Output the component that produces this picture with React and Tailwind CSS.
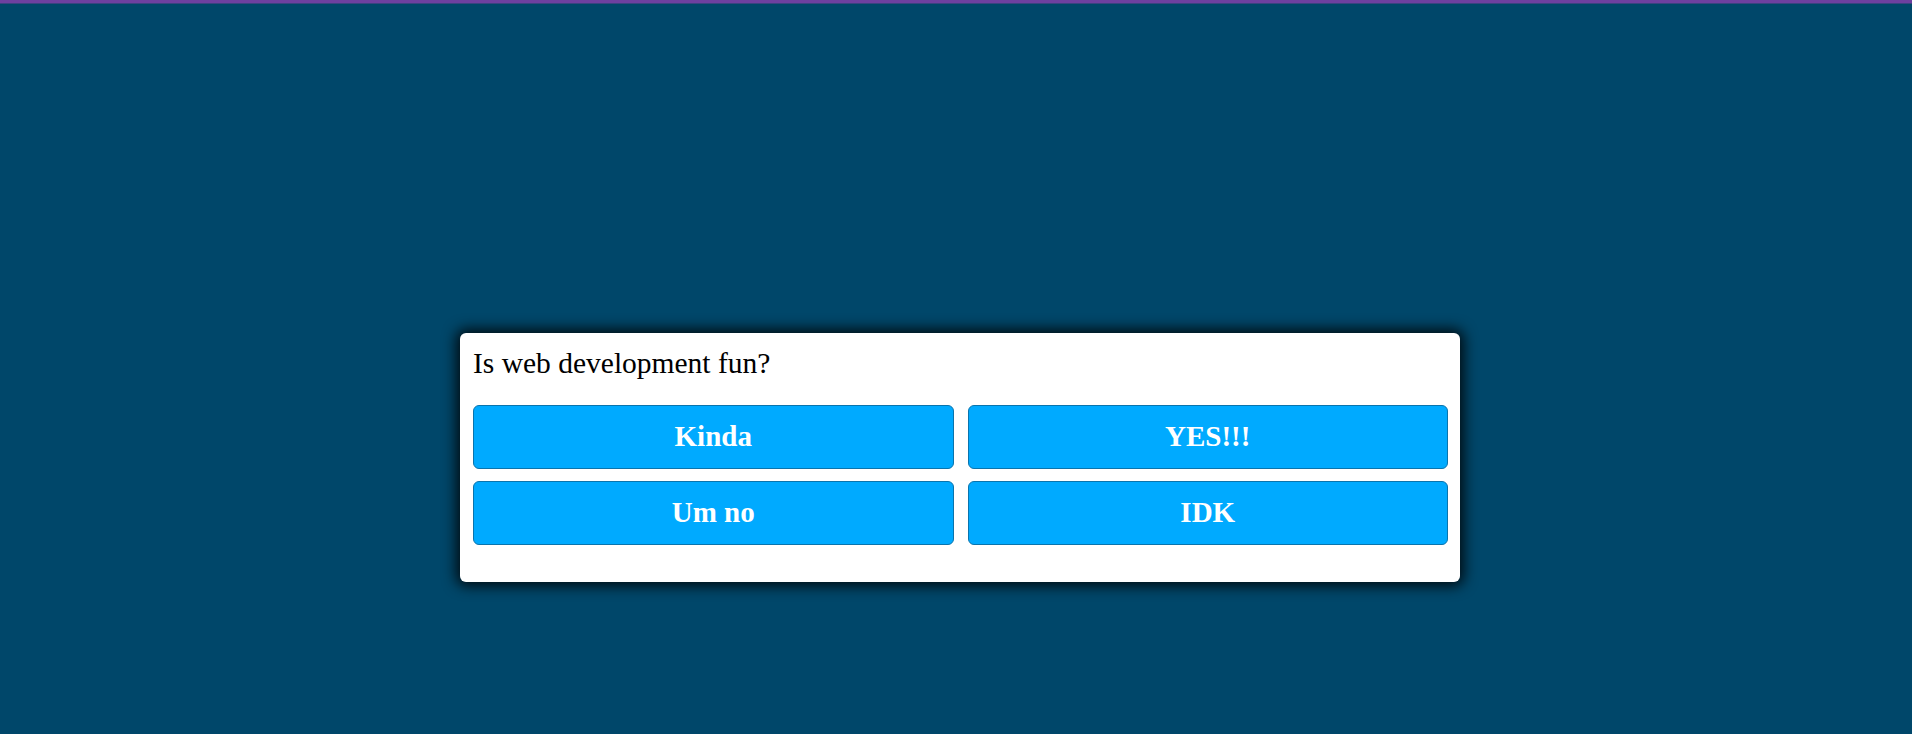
import React from 'react';

const answers = ['Kinda', 'YES!!!', 'Um no', 'IDK'];

const App = () => {
  return (
    <div className="min-h-[734px] bg-[#00476a] font-['Liberation_Serif',serif]">
      {/* top strip */}
      <div className="h-[3px] bg-[#6e40a0]" />
      <div className="h-[1px] bg-[#3a4380]" />

      <div className="flex justify-center pl-2 pt-[329px]">
        <div className="w-[1000px] h-[249px] rounded-[6px] bg-white pl-[13px] pr-[12px] pt-[12px] shadow-[0_0_14px_4px_rgba(0,0,0,0.85)]">
          <p className="text-[29.5px] leading-[36px] text-black">Is web development fun?</p>
          <div className="mt-[24px] grid grid-cols-2 gap-x-[14px] gap-y-[12px]">
            {answers.map((a) => (
              <button
                key={a}
                className="h-[64px] rounded-[6px] border border-[#0a74ad] bg-[#00aaff] text-[29px] font-bold text-white"
              >
                {a}
              </button>
            ))}
          </div>
        </div>
      </div>
    </div>
  );
};

export default App;
